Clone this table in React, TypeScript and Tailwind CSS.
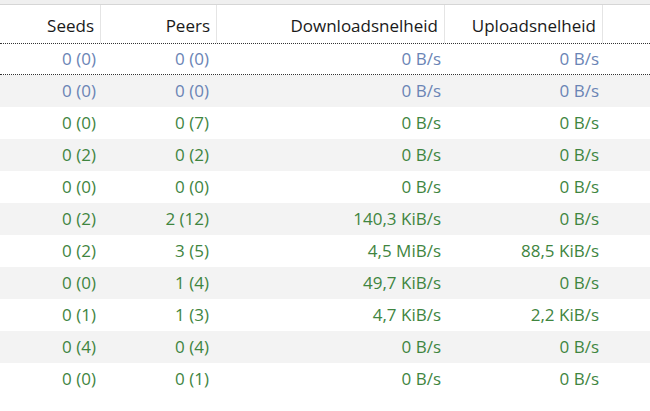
import React from "react";

type Row = { seeds: string; peers: string; down: string; up: string };

const ROWS: Row[] = [
  { seeds: "0 (0)", peers: "0 (0)", down: "0 B/s", up: "0 B/s" },
  { seeds: "0 (0)", peers: "0 (0)", down: "0 B/s", up: "0 B/s" },
  { seeds: "0 (0)", peers: "0 (7)", down: "0 B/s", up: "0 B/s" },
  { seeds: "0 (2)", peers: "0 (2)", down: "0 B/s", up: "0 B/s" },
  { seeds: "0 (0)", peers: "0 (0)", down: "0 B/s", up: "0 B/s" },
  { seeds: "0 (2)", peers: "2 (12)", down: "140,3 KiB/s", up: "0 B/s" },
  { seeds: "0 (2)", peers: "3 (5)", down: "4,5 MiB/s", up: "88,5 KiB/s" },
  { seeds: "0 (0)", peers: "1 (4)", down: "49,7 KiB/s", up: "0 B/s" },
  { seeds: "0 (1)", peers: "1 (3)", down: "4,7 KiB/s", up: "2,2 KiB/s" },
  { seeds: "0 (4)", peers: "0 (4)", down: "0 B/s", up: "0 B/s" },
  { seeds: "0 (0)", peers: "0 (1)", down: "0 B/s", up: "0 B/s" },
];

const cols = "grid grid-cols-[101px_116px_228px_158px_1fr]";

export default function App() {
  return (
    <div
      className="w-[650px] h-[411px] overflow-hidden bg-white text-[17px]"
      style={{ fontFamily: '"Open Sans", "Noto Sans", sans-serif' }}
    >
      {/* window chrome strip */}
      <div className="h-[5px] bg-[#f0f0f0] border-b border-[#d6d6d6]" />

      {/* header */}
      <div className={`${cols} h-[38px] text-[#1a1a1a]`}>
        {["Seeds", "Peers", "Downloadsnelheid", "Uploadsnelheid"].map((h) => (
          <div key={h} className="flex items-center justify-end pt-[3px] pr-[6px] border-r border-[#e5e5e5]">
            {h}
          </div>
        ))}
        <div />
      </div>

      {/* rows */}
      {ROWS.map((r, i) => {
        const color = i < 2 ? "text-[#6a84b5]" : "text-[#3f853f]";
        const bg = i % 2 === 1 ? "bg-[#f3f3f3]" : "bg-white";
        const focus = i === 0 ? "border-y border-dotted border-[#333]" : "";
        return (
          <div key={i} className={`${cols} h-[32px] ${bg} ${color} ${focus}`}>
            <div className="flex items-center justify-end pr-[5px]">{r.seeds}</div>
            <div className="flex items-center justify-end pr-[8px]">{r.peers}</div>
            <div className="flex items-center justify-end pr-[4px]">{r.down}</div>
            <div className="flex items-center justify-end pr-[4px]">{r.up}</div>
            <div />
          </div>
        );
      })}
    </div>
  );
}
